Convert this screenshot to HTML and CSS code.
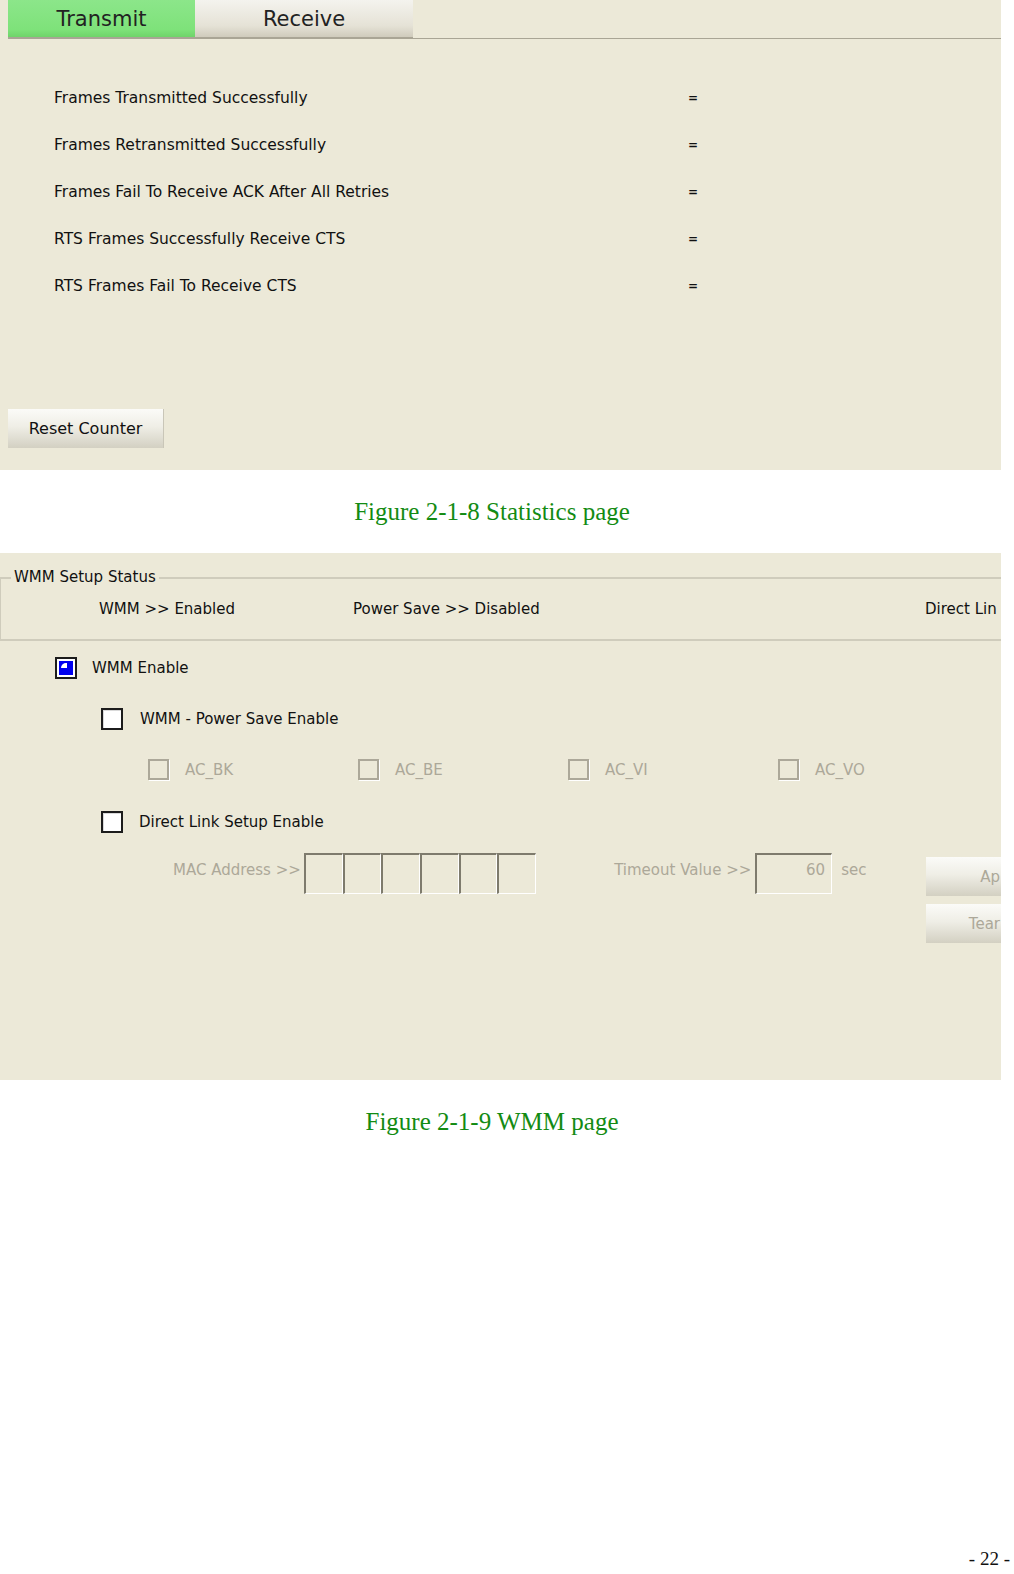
FILE: index.html
```html
<!DOCTYPE html>
<html>
<head>
<meta charset="utf-8">
<link rel="stylesheet" href="styles.css">
</head>
<body>
<div class="doc">
  <section class="panel stats">
    <div class="tabs">
      <div class="tab active">Transmit</div>
      <div class="tab">Receive</div>
      <div class="tabline"></div>
    </div>
    <div class="rows">
      <div class="row"><span class="lbl">Frames Transmitted Successfully</span><span class="eq">=</span></div>
      <div class="row"><span class="lbl">Frames Retransmitted Successfully</span><span class="eq">=</span></div>
      <div class="row"><span class="lbl">Frames Fail To Receive ACK After All Retries</span><span class="eq">=</span></div>
      <div class="row"><span class="lbl">RTS Frames Successfully Receive CTS</span><span class="eq">=</span></div>
      <div class="row"><span class="lbl">RTS Frames Fail To Receive CTS</span><span class="eq">=</span></div>
    </div>
    <div class="btn reset">Reset Counter</div>
  </section>
  <p class="caption cap1">Figure 2-1-8 Statistics page</p>

  <section class="panel wmm">
    <div class="group">
      <div class="legend">WMM Setup Status</div>
      <div class="status">
        <span class="s1">WMM &gt;&gt; Enabled</span>
        <span class="s2">Power Save &gt;&gt; Disabled</span>
        <span class="s3">Direct Lin</span>
      </div>
    </div>
    <div class="opt o1"><span class="cb checked"></span><span>WMM Enable</span></div>
    <div class="opt o2"><span class="cb"></span><span>WMM - Power Save Enable</span></div>
    <div class="acs">
      <div class="ac"><span class="cb dis"></span><span>AC_BK</span></div>
      <div class="ac"><span class="cb dis"></span><span>AC_BE</span></div>
      <div class="ac"><span class="cb dis"></span><span>AC_VI</span></div>
      <div class="ac"><span class="cb dis"></span><span>AC_VO</span></div>
    </div>
    <div class="opt o3"><span class="cb"></span><span>Direct Link Setup Enable</span></div>
    <div class="dls">
      <div class="macline">
        <span class="dim maclbl">MAC Address &gt;&gt;</span>
        <div class="macs"><span class="box"></span><span class="box"></span><span class="box"></span><span class="box"></span><span class="box"></span><span class="box"></span></div>
        <span class="dim tolbl">Timeout Value &gt;&gt;</span>
        <span class="box tbox">60</span>
        <span class="dim sec">sec</span>
      </div>
      <div class="btns">
        <div class="btn dbtn">Ap</div>
        <div class="btn dbtn">Tear</div>
      </div>
    </div>
  </section>
  <p class="caption cap2">Figure 2-1-9 WMM page</p>
  <div class="pageno">- 22 -</div>
</div>
</body>
</html>
```

FILE: styles.css
```css
* { box-sizing: border-box; }
html, body { margin: 0; padding: 0; background: #ffffff; overflow: hidden; }
body { width: 1014px; height: 1574px; }
.doc { position: relative; width: 1014px; height: 1574px; overflow: hidden; }

.panel {
  width: 1001px;
  background: #ece9d8;
  font-family: "DejaVu Sans", Tahoma, sans-serif;
  font-size: 14px;
  color: #111;
}

.stats { height: 470px; display: flex; flex-direction: column; }
.tabs { display: flex; height: 40px; padding-left: 8px; }
.tab {
  width: 218px;
  height: 39px;
  display: flex; align-items: center; justify-content: center;
  font-size: 21px;
  color: #222;
  background: linear-gradient(#f4f3ee, #e5e2d6 70%, #cfcbbc);
  border-bottom: 2px solid #a9a595;
}
.tab.active {
  width: 187px;
  background: linear-gradient(#8ce68a, #7ee27a 80%, #6fd46a);
}
.tabline { flex: 1; height: 39px; border-bottom: 1px solid #a9a595; }

.rows { padding-left: 54px; padding-top: 48px; }
.row { height: 47px; display: flex; align-items: flex-start; }
.row .lbl { width: 634px; line-height: 20px; font-size: 15.5px; }
.row .eq { line-height: 20px; font-size: 12px; font-weight: bold; }

.btn {
  background: linear-gradient(#fbfbf8, #efeee6 45%, #d3d0c2);
  border-right: 1px solid #c9c6b8;
  display: flex; align-items: center; justify-content: center;
}
.reset {
  margin-top: 86px;
  margin-left: 8px;
  width: 156px; height: 39px;
  font-size: 16px;
}

.caption {
  margin: 0;
  text-align: center;
  font-family: "Liberation Serif", "Times New Roman", serif;
  font-size: 25px;
  color: #138b13;
  padding-right: 30px;
}
.cap1 { height: 83px; padding-top: 28px; }
.cap2 { padding-top: 28px; }

.wmm { height: 527px; overflow: hidden; padding-top: 15px; }
.group {
  position: relative;
  height: 64px;
  border-top: 2px solid #cfccbc;
  border-bottom: 2px solid #cfccbc;
  border-left: 1px solid #cfccbc;
  margin-top: 9px;
}
.legend {
  position: absolute; left: 10px; top: -12px;
  background: #ece9d8; padding: 0 3px;
  font-size: 15px; line-height: 20px;
}
.status { position: relative; height: 100%; font-size: 15px; white-space: nowrap; }
.status span { position: absolute; top: 21px; }
.s1 { left: 98px; }
.s2 { left: 352px; }
.s3 { left: 924px; }

.opt { display: flex; align-items: center; gap: 15px; font-size: 15px; }
.o1 { margin-top: 16px; margin-left: 55px; }
.o2 { margin-top: 29px; margin-left: 101px; gap: 17px; }
.o3 { margin-top: 31px; margin-left: 101px; gap: 16px; }

.cb {
  width: 22px; height: 22px;
  border: 2px solid #1c1c1c;
  background: #fff;
  box-shadow: inset 1px 1px 0 #d9d9d9;
  flex: none;
}
.cb.checked {
  background: #0000f0;
  box-shadow: inset 0 0 0 2px #ffffff;
  position: relative;
}
.cb.checked::after {
  content: ""; position: absolute; left: 4px; top: 4px;
  width: 6px; height: 5px;
  background: #fff;
  border-radius: 5px 0 0 0;
}
.cb.dis {
  width: 21px; height: 21px;
  border: 2px solid #aca899;
  background: transparent;
  box-shadow: 1px 1px 0 #fff;
}

.acs { display: flex; margin-top: 29px; margin-left: 148px; }
.ac { width: 210px; display: flex; align-items: center; gap: 16px; color: #aca899; font-size: 15px; }

.dls { display: flex; margin-top: 20px; }
.macline { display: flex; align-items: flex-start; height: 41px; width: 926px; padding-left: 173px; }
.dim { color: #aca899; font-size: 15px; line-height: 18px; margin-top: 8px; white-space: nowrap; }
.maclbl { width: 131px; }
.macs { display: flex; }
.box {
  width: 39px; height: 41px;
  border-top: 2px solid #7e7b6d;
  border-left: 2px solid #7e7b6d;
  border-right: 1px solid #ffffff;
  border-bottom: 1px solid #ffffff;
}
.macs .box { width: 38.7px; }
.tolbl { margin-left: 78px; width: 141px; }
.tbox {
  width: 77px;
  color: #aca899; font-size: 15px;
  text-align: right; padding-right: 6px; padding-top: 6px;
}
.sec { margin-left: 9px; }
.btns { width: 75px; flex: none; margin-top: 4px; display: flex; flex-direction: column; gap: 8px; }
.dbtn {
  width: 75px; height: 39px;
  justify-content: flex-end;
  color: #aca899; font-size: 15px;
  overflow: hidden; white-space: nowrap;
  border-right: none;
  padding-right: 1px;
}

.pageno {
  position: absolute; right: 4px; top: 1549px;
  line-height: 20px;
  font-family: "Liberation Serif", "Times New Roman", serif;
  font-size: 19px; color: #111;
}
```
